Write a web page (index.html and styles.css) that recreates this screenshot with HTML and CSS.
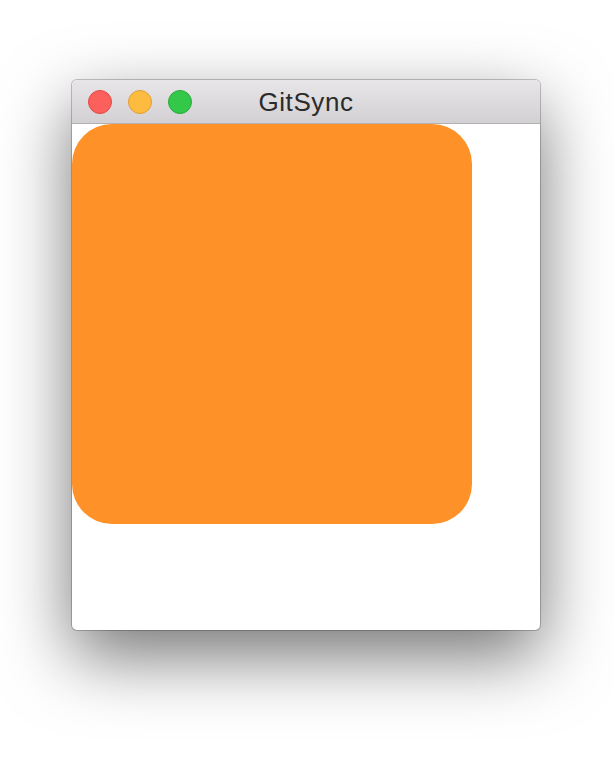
FILE: index.html
```html
<!DOCTYPE html>
<html>
<head>
<meta charset="utf-8">
<link rel="stylesheet" href="styles.css">
</head>
<body>
<div class="window">
  <div class="titlebar">
    <div class="lights">
      <span class="light red"></span>
      <span class="light yellow"></span>
      <span class="light green"></span>
    </div>
    <div class="title">GitSync</div>
  </div>
  <div class="content">
    <div class="tile"></div>
  </div>
</div>
</body>
</html>
```
FILE: styles.css
```css
html, body {
  margin: 0;
  padding: 0;
  background: #ffffff;
}
body {
  width: 614px;
  height: 766px;
  overflow: hidden;
  padding-top: 80px;
  padding-left: 72px;
  box-sizing: border-box;
}
.window {
  width: 468px;
  height: 550px;
  box-sizing: border-box;
  border-radius: 5px;
  overflow: hidden;
  background: #ffffff;
  box-shadow: 0 0 0 1px rgba(0,0,0,0.22), 0 26px 70px rgba(0,0,0,0.55);
  display: flex;
  flex-direction: column;
}
.titlebar {
  position: relative;
  height: 43px;
  flex: none;
  background: linear-gradient(#e8e6e8, #d2d0d2);
  border-bottom: 1px solid #b3b1b3;
  display: flex;
  align-items: center;
  justify-content: center;
}
.lights {
  position: absolute;
  left: 16px;
  top: 10px;
  display: flex;
  gap: 16px;
}
.light {
  width: 24px;
  height: 24px;
  border-radius: 50%;
  box-sizing: border-box;
}
.red { background: #fc605c; border: 1px solid #de4a46; }
.yellow { background: #fdbc40; border: 1px solid #de9f32; }
.green { background: #34c84a; border: 1px solid #27aa35; }
.title {
  font-family: "Liberation Sans", Arial, sans-serif;
  font-size: 26px;
  letter-spacing: 0.6px;
  color: #2b2b2b;
  padding-top: 1px;
}
.content {
  flex: 1;
  display: flex;
  align-items: flex-start;
}
.tile {
  width: 400px;
  height: 400px;
  background: #fe9127;
  border-radius: 40px;
}
```
